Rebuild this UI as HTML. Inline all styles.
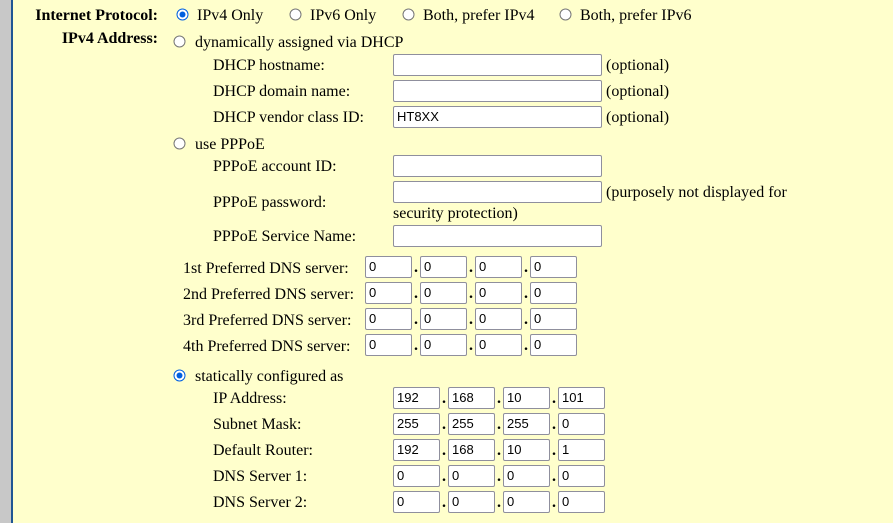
<!DOCTYPE html>
<html><head><meta charset="utf-8"><style>
body{margin:0;width:893px;height:523px;overflow:hidden;background:#ffffcc;font-family:"Liberation Serif",serif;font-size:16px;color:#000;position:relative}
.g{position:absolute;left:0;top:0;width:11px;height:523px;background:#c8c8c8}
.b{position:absolute;left:11px;top:0;width:2px;height:523px;background:#1f5594}
.t{position:absolute;white-space:nowrap;line-height:18px;transform:translateY(-8px)}
.bd{font-weight:bold}
.r{position:absolute;width:10px;height:10px;border:1.5px solid #767676;border-radius:50%;background:#fff;transform:translate(-6.5px,-6.5px)}
.r.on{border:1.5px solid #0060df;width:10px;height:10px}
.r.on::after{content:"";position:absolute;left:2px;top:2px;width:6px;height:6px;border-radius:50%;background:#0060df}
.i{position:absolute;box-sizing:border-box;height:22px;border:1px solid #8f8f9d;border-radius:2px;background:#fff;font-family:"Liberation Sans",sans-serif;font-size:13px;line-height:20px;padding-left:3px}
.d{position:absolute;font-size:16px;line-height:16px;font-weight:bold;transform:translateY(-6px)}
</style></head><body>
<div class="g"></div><div class="b"></div>

<div class="t bd" style="right:735px;top:15px">Internet Protocol:</div>
<div class="r on" style="left:183px;top:15px"></div><div class="t" style="left:197px;top:15px">IPv4 Only</div>
<div class="r" style="left:296px;top:15px"></div><div class="t" style="left:310px;top:15px">IPv6 Only</div>
<div class="r" style="left:409px;top:15px"></div><div class="t" style="left:423px;top:15px">Both, prefer IPv4</div>
<div class="r" style="left:566px;top:15px"></div><div class="t" style="left:580px;top:15px">Both, prefer IPv6</div>

<div class="t bd" style="right:735px;top:38px">IPv4 Address:</div>
<div class="r" style="left:180px;top:42px"></div><div class="t" style="left:195px;top:42px">dynamically assigned via DHCP</div>

<div class="t" style="left:213px;top:65px">DHCP hostname:</div>
<div class="i" style="left:393px;top:54px;width:209px"></div><div class="t" style="left:606px;top:65px">(optional)</div>
<div class="t" style="left:213px;top:91px">DHCP domain name:</div>
<div class="i" style="left:393px;top:80px;width:209px"></div><div class="t" style="left:606px;top:91px">(optional)</div>
<div class="t" style="left:213px;top:117px">DHCP vendor class ID:</div>
<div class="i" style="left:393px;top:106px;width:209px">HT8XX</div><div class="t" style="left:606px;top:117px">(optional)</div>

<div class="r" style="left:180px;top:144px"></div><div class="t" style="left:195px;top:144px">use PPPoE</div>
<div class="t" style="left:213px;top:166px">PPPoE account ID:</div>
<div class="i" style="left:393px;top:155px;width:209px"></div>
<div class="t" style="left:213px;top:202px">PPPoE password:</div>
<div class="i" style="left:393px;top:181px;width:209px"></div>
<div class="t" style="left:606px;top:192px">(purposely not displayed for</div>
<div class="t" style="left:393px;top:213px">security protection)</div>
<div class="t" style="left:213px;top:236px">PPPoE Service Name:</div>
<div class="i" style="left:393px;top:225px;width:209px"></div>

<div class="t" style="left:183px;top:268px">1st Preferred DNS server:</div>
<div class="i" style="left:365px;top:256px;width:47px">0</div><div class="d" style="left:414px;top:266px">.</div>
<div class="i" style="left:420px;top:256px;width:47px">0</div><div class="d" style="left:469px;top:266px">.</div>
<div class="i" style="left:475px;top:256px;width:47px">0</div><div class="d" style="left:524px;top:266px">.</div>
<div class="i" style="left:530px;top:256px;width:47px">0</div>

<div class="t" style="left:183px;top:294px">2nd Preferred DNS server:</div>
<div class="i" style="left:365px;top:282px;width:47px">0</div><div class="d" style="left:414px;top:292px">.</div>
<div class="i" style="left:420px;top:282px;width:47px">0</div><div class="d" style="left:469px;top:292px">.</div>
<div class="i" style="left:475px;top:282px;width:47px">0</div><div class="d" style="left:524px;top:292px">.</div>
<div class="i" style="left:530px;top:282px;width:47px">0</div>

<div class="t" style="left:183px;top:320px">3rd Preferred DNS server:</div>
<div class="i" style="left:365px;top:308px;width:47px">0</div><div class="d" style="left:414px;top:318px">.</div>
<div class="i" style="left:420px;top:308px;width:47px">0</div><div class="d" style="left:469px;top:318px">.</div>
<div class="i" style="left:475px;top:308px;width:47px">0</div><div class="d" style="left:524px;top:318px">.</div>
<div class="i" style="left:530px;top:308px;width:47px">0</div>

<div class="t" style="left:183px;top:346px">4th Preferred DNS server:</div>
<div class="i" style="left:365px;top:334px;width:47px">0</div><div class="d" style="left:414px;top:344px">.</div>
<div class="i" style="left:420px;top:334px;width:47px">0</div><div class="d" style="left:469px;top:344px">.</div>
<div class="i" style="left:475px;top:334px;width:47px">0</div><div class="d" style="left:524px;top:344px">.</div>
<div class="i" style="left:530px;top:334px;width:47px">0</div>

<div class="r on" style="left:180px;top:376px"></div><div class="t" style="left:195px;top:376px">statically configured as</div>

<div class="t" style="left:213px;top:398px">IP Address:</div>
<div class="i" style="left:393px;top:387px;width:47px">192</div><div class="d" style="left:442px;top:397px">.</div>
<div class="i" style="left:448px;top:387px;width:47px">168</div><div class="d" style="left:497px;top:397px">.</div>
<div class="i" style="left:503px;top:387px;width:47px">10</div><div class="d" style="left:552px;top:397px">.</div>
<div class="i" style="left:558px;top:387px;width:47px">101</div>

<div class="t" style="left:213px;top:424px">Subnet Mask:</div>
<div class="i" style="left:393px;top:413px;width:47px">255</div><div class="d" style="left:442px;top:423px">.</div>
<div class="i" style="left:448px;top:413px;width:47px">255</div><div class="d" style="left:497px;top:423px">.</div>
<div class="i" style="left:503px;top:413px;width:47px">255</div><div class="d" style="left:552px;top:423px">.</div>
<div class="i" style="left:558px;top:413px;width:47px">0</div>

<div class="t" style="left:213px;top:450px">Default Router:</div>
<div class="i" style="left:393px;top:439px;width:47px">192</div><div class="d" style="left:442px;top:449px">.</div>
<div class="i" style="left:448px;top:439px;width:47px">168</div><div class="d" style="left:497px;top:449px">.</div>
<div class="i" style="left:503px;top:439px;width:47px">10</div><div class="d" style="left:552px;top:449px">.</div>
<div class="i" style="left:558px;top:439px;width:47px">1</div>

<div class="t" style="left:213px;top:476px">DNS Server 1:</div>
<div class="i" style="left:393px;top:465px;width:47px">0</div><div class="d" style="left:442px;top:475px">.</div>
<div class="i" style="left:448px;top:465px;width:47px">0</div><div class="d" style="left:497px;top:475px">.</div>
<div class="i" style="left:503px;top:465px;width:47px">0</div><div class="d" style="left:552px;top:475px">.</div>
<div class="i" style="left:558px;top:465px;width:47px">0</div>

<div class="t" style="left:213px;top:502px">DNS Server 2:</div>
<div class="i" style="left:393px;top:491px;width:47px">0</div><div class="d" style="left:442px;top:501px">.</div>
<div class="i" style="left:448px;top:491px;width:47px">0</div><div class="d" style="left:497px;top:501px">.</div>
<div class="i" style="left:503px;top:491px;width:47px">0</div><div class="d" style="left:552px;top:501px">.</div>
<div class="i" style="left:558px;top:491px;width:47px">0</div>
</body></html>
